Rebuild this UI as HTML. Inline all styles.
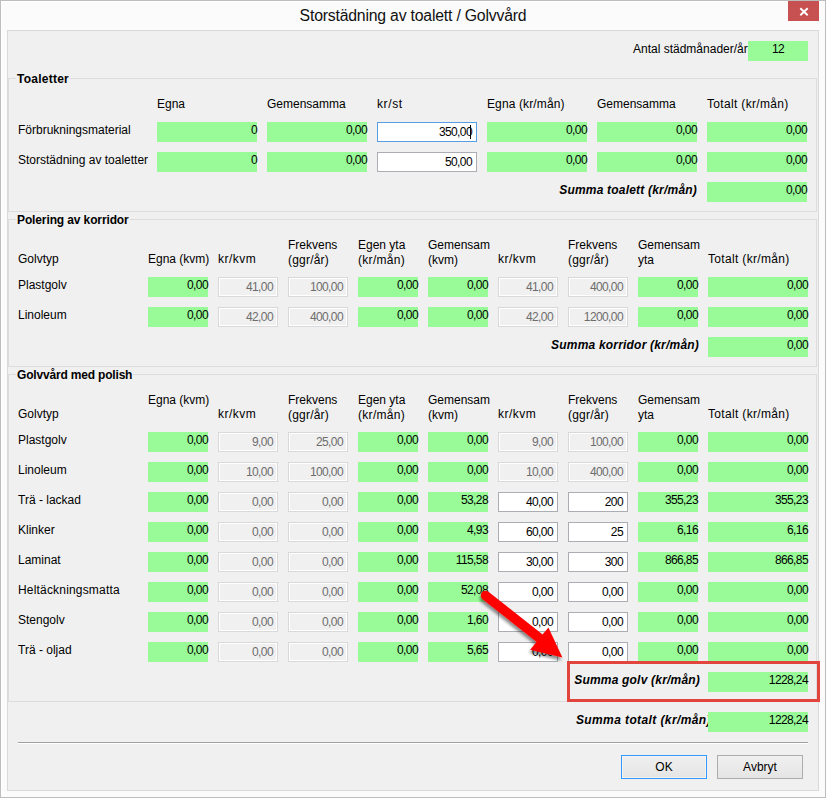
<!DOCTYPE html>
<html><head><meta charset="utf-8"><style>
html,body{margin:0;padding:0;width:826px;height:798px;overflow:hidden;background:#fbfbfb;}
body{position:relative;font-family:'Liberation Sans', sans-serif;font-size:12px;color:#000;}
.t{position:absolute;white-space:nowrap;line-height:14px;}
.b{font-weight:bold;}
.bi{font-weight:bold;font-style:italic;letter-spacing:0.2px;}
.ln{position:absolute;}
.g{position:absolute;background:#98fb98;}
.g i,.d i,.w i{font-style:normal;position:absolute;white-space:nowrap;line-height:14px;letter-spacing:-0.6px;}
.g i{right:0px;top:1px;}
.g i.c{right:auto;left:0;width:100%;text-align:center;}
.d,.w{position:absolute;border:1px solid #d9d9d9;}
.d{background:#f0f0f0;box-shadow:inset 0 0 0 1px #fff;color:#6d6d6d;}
.w{background:#fff;border-color:#abadb3;}
.w.f{border-color:#569de5;}
.d i,.w i{right:4px;top:2px;}
.caret{position:absolute;left:92px;top:2px;width:1px;height:14px;background:#000;}
</style></head><body>
<div class="ln" style="left:0;top:0;width:824px;height:796px;border:1px solid #bdbdbd;background:#fbfbfb"></div>
<div class="ln" style="left:1px;top:1px;width:823px;height:1px;background:#fff"></div>
<div class="ln" style="left:1px;top:1px;width:1px;height:795px;background:#fff"></div>
<div class="t" style="left:0;width:826px;text-align:center;top:7px;font-size:15.8px;line-height:18px;letter-spacing:-0.2px;color:#111">Storstädning av toalett / Golvvård</div>
<div class="ln" style="left:788px;top:1px;width:31px;height:20px;background:#c75050"></div>
<svg class="ln" style="left:788px;top:1px" width="31" height="20"><path d="M12.3 7.2 L19.7 14.3 M19.7 7.2 L12.3 14.3" stroke="#fff" stroke-width="1.9"/></svg>
<div class="ln" style="left:7px;top:30px;width:810px;height:759px;border:1px solid #d9d9d9;background:#f0f0f0"></div>
<div class="t " style="left:633px;top:42px;">Antal städmånader/år</div>
<div class="g" style="left:748px;top:41px;width:60px;height:20px"><i class="c">12</i></div>
<div class="ln" style="left:8px;top:78px;width:1px;height:134px;background:#dcdcdc"></div>
<div class="ln" style="left:816px;top:78px;width:1px;height:134px;background:#dcdcdc"></div>
<div class="ln" style="left:8px;top:211px;width:809px;height:1px;background:#dcdcdc"></div>
<div class="ln" style="left:8px;top:78px;width:8px;height:1px;background:#dcdcdc"></div>
<div class="ln" style="left:70px;top:78px;width:747px;height:1px;background:#dcdcdc"></div>
<div class="t b" style="left:17px;top:72px;letter-spacing:0.25px">Toaletter</div>
<div class="t " style="left:157px;top:97px;">Egna</div>
<div class="t " style="left:267px;top:97px;">Gemensamma</div>
<div class="t " style="left:377px;top:97px;letter-spacing:0.6px">kr/st</div>
<div class="t " style="left:487px;top:97px;letter-spacing:0.12px">Egna (kr/mån)</div>
<div class="t " style="left:597px;top:97px;">Gemensamma</div>
<div class="t " style="left:707px;top:97px;letter-spacing:0.33px">Totalt (kr/mån)</div>
<div class="t " style="left:18px;top:123px;">Förbrukningsmaterial</div>
<div class="g" style="left:157px;top:122px;width:100px;height:20px"><i>0</i></div>
<div class="g" style="left:267px;top:122px;width:100px;height:20px"><i>0,00</i></div>
<div class="w f" style="left:377px;top:122px;width:98px;height:18px"><i>350,00</i><b class="caret"></b></div>
<div class="g" style="left:487px;top:122px;width:100px;height:20px"><i>0,00</i></div>
<div class="g" style="left:597px;top:122px;width:100px;height:20px"><i>0,00</i></div>
<div class="g" style="left:707px;top:122px;width:100px;height:20px"><i>0,00</i></div>
<div class="t " style="left:18px;top:153px;">Storstädning av toaletter</div>
<div class="g" style="left:157px;top:152px;width:100px;height:20px"><i>0</i></div>
<div class="g" style="left:267px;top:152px;width:100px;height:20px"><i>0,00</i></div>
<div class="w" style="left:377px;top:152px;width:98px;height:18px"><i>50,00</i></div>
<div class="g" style="left:487px;top:152px;width:100px;height:20px"><i>0,00</i></div>
<div class="g" style="left:597px;top:152px;width:100px;height:20px"><i>0,00</i></div>
<div class="g" style="left:707px;top:152px;width:100px;height:20px"><i>0,00</i></div>
<div class="t bi" style="right:129px;top:183px;">Summa toalett (kr/mån)</div>
<div class="g" style="left:707px;top:182px;width:100px;height:20px"><i>0,00</i></div>
<div class="ln" style="left:8px;top:219px;width:1px;height:148px;background:#dcdcdc"></div>
<div class="ln" style="left:816px;top:219px;width:1px;height:148px;background:#dcdcdc"></div>
<div class="ln" style="left:8px;top:366px;width:809px;height:1px;background:#dcdcdc"></div>
<div class="ln" style="left:8px;top:219px;width:8px;height:1px;background:#dcdcdc"></div>
<div class="ln" style="left:130px;top:219px;width:687px;height:1px;background:#dcdcdc"></div>
<div class="t b" style="left:17px;top:213px;letter-spacing:-0.12px">Polering av korridor</div>
<div class="t " style="left:18px;top:252px;">Golvtyp</div>
<div class="t " style="left:148px;top:252px;">Egna (kvm)</div>
<div class="t " style="left:218px;top:252px;letter-spacing:0.5px">kr/kvm</div>
<div class="t " style="left:288px;top:238px;">Frekvens</div>
<div class="t " style="left:288px;top:253px;letter-spacing:0.2px">(ggr/år)</div>
<div class="t " style="left:358px;top:238px;">Egen yta</div>
<div class="t " style="left:358px;top:253px;letter-spacing:0.3px">(kr/mån)</div>
<div class="t " style="left:428px;top:238px;">Gemensam</div>
<div class="t " style="left:428px;top:253px;">(kvm)</div>
<div class="t " style="left:498px;top:252px;letter-spacing:0.5px">kr/kvm</div>
<div class="t " style="left:568px;top:238px;">Frekvens</div>
<div class="t " style="left:568px;top:253px;letter-spacing:0.2px">(ggr/år)</div>
<div class="t " style="left:638px;top:238px;">Gemensam</div>
<div class="t " style="left:638px;top:253px;">yta</div>
<div class="t " style="left:708px;top:252px;letter-spacing:0.33px">Totalt (kr/mån)</div>
<div class="t " style="left:18px;top:278px;">Plastgolv</div>
<div class="g" style="left:148px;top:277px;width:60px;height:20px"><i>0,00</i></div>
<div class="d" style="left:218px;top:277px;width:58px;height:18px"><i>41,00</i></div>
<div class="d" style="left:288px;top:277px;width:58px;height:18px"><i>100,00</i></div>
<div class="g" style="left:358px;top:277px;width:60px;height:20px"><i>0,00</i></div>
<div class="g" style="left:428px;top:277px;width:60px;height:20px"><i>0,00</i></div>
<div class="d" style="left:498px;top:277px;width:58px;height:18px"><i>41,00</i></div>
<div class="d" style="left:568px;top:277px;width:58px;height:18px"><i>400,00</i></div>
<div class="g" style="left:638px;top:277px;width:60px;height:20px"><i>0,00</i></div>
<div class="g" style="left:708px;top:277px;width:100px;height:20px"><i>0,00</i></div>
<div class="t " style="left:18px;top:308px;">Linoleum</div>
<div class="g" style="left:148px;top:307px;width:60px;height:20px"><i>0,00</i></div>
<div class="d" style="left:218px;top:307px;width:58px;height:18px"><i>42,00</i></div>
<div class="d" style="left:288px;top:307px;width:58px;height:18px"><i>400,00</i></div>
<div class="g" style="left:358px;top:307px;width:60px;height:20px"><i>0,00</i></div>
<div class="g" style="left:428px;top:307px;width:60px;height:20px"><i>0,00</i></div>
<div class="d" style="left:498px;top:307px;width:58px;height:18px"><i>42,00</i></div>
<div class="d" style="left:568px;top:307px;width:58px;height:18px"><i>1200,00</i></div>
<div class="g" style="left:638px;top:307px;width:60px;height:20px"><i>0,00</i></div>
<div class="g" style="left:708px;top:307px;width:100px;height:20px"><i>0,00</i></div>
<div class="t bi" style="right:127px;top:338px;">Summa korridor (kr/mån)</div>
<div class="g" style="left:708px;top:337px;width:100px;height:20px"><i>0,00</i></div>
<div class="ln" style="left:8px;top:374px;width:1px;height:328px;background:#dcdcdc"></div>
<div class="ln" style="left:816px;top:374px;width:1px;height:328px;background:#dcdcdc"></div>
<div class="ln" style="left:8px;top:701px;width:809px;height:1px;background:#dcdcdc"></div>
<div class="ln" style="left:8px;top:374px;width:8px;height:1px;background:#dcdcdc"></div>
<div class="ln" style="left:133px;top:374px;width:684px;height:1px;background:#dcdcdc"></div>
<div class="t b" style="left:17px;top:368px;letter-spacing:-0.18px">Golvvård med polish</div>
<div class="t " style="left:18px;top:407px;">Golvtyp</div>
<div class="t " style="left:148px;top:393px;">Egna (kvm)</div>
<div class="t " style="left:218px;top:407px;letter-spacing:0.5px">kr/kvm</div>
<div class="t " style="left:288px;top:393px;">Frekvens</div>
<div class="t " style="left:288px;top:408px;letter-spacing:0.2px">(ggr/år)</div>
<div class="t " style="left:358px;top:393px;">Egen yta</div>
<div class="t " style="left:358px;top:408px;letter-spacing:0.3px">(kr/mån)</div>
<div class="t " style="left:428px;top:393px;">Gemensam</div>
<div class="t " style="left:428px;top:408px;">(kvm)</div>
<div class="t " style="left:498px;top:407px;letter-spacing:0.5px">kr/kvm</div>
<div class="t " style="left:568px;top:393px;">Frekvens</div>
<div class="t " style="left:568px;top:408px;letter-spacing:0.2px">(ggr/år)</div>
<div class="t " style="left:638px;top:393px;">Gemensam</div>
<div class="t " style="left:638px;top:408px;">yta</div>
<div class="t " style="left:708px;top:407px;letter-spacing:0.33px">Totalt (kr/mån)</div>
<div class="t " style="left:18px;top:433px;">Plastgolv</div>
<div class="g" style="left:148px;top:432px;width:60px;height:20px"><i>0,00</i></div>
<div class="d" style="left:218px;top:432px;width:58px;height:18px"><i>9,00</i></div>
<div class="d" style="left:288px;top:432px;width:58px;height:18px"><i>25,00</i></div>
<div class="g" style="left:358px;top:432px;width:60px;height:20px"><i>0,00</i></div>
<div class="g" style="left:428px;top:432px;width:60px;height:20px"><i>0,00</i></div>
<div class="d" style="left:498px;top:432px;width:58px;height:18px"><i>9,00</i></div>
<div class="d" style="left:568px;top:432px;width:58px;height:18px"><i>100,00</i></div>
<div class="g" style="left:638px;top:432px;width:60px;height:20px"><i>0,00</i></div>
<div class="g" style="left:708px;top:432px;width:100px;height:20px"><i>0,00</i></div>
<div class="t " style="left:18px;top:463px;">Linoleum</div>
<div class="g" style="left:148px;top:462px;width:60px;height:20px"><i>0,00</i></div>
<div class="d" style="left:218px;top:462px;width:58px;height:18px"><i>10,00</i></div>
<div class="d" style="left:288px;top:462px;width:58px;height:18px"><i>100,00</i></div>
<div class="g" style="left:358px;top:462px;width:60px;height:20px"><i>0,00</i></div>
<div class="g" style="left:428px;top:462px;width:60px;height:20px"><i>0,00</i></div>
<div class="d" style="left:498px;top:462px;width:58px;height:18px"><i>10,00</i></div>
<div class="d" style="left:568px;top:462px;width:58px;height:18px"><i>400,00</i></div>
<div class="g" style="left:638px;top:462px;width:60px;height:20px"><i>0,00</i></div>
<div class="g" style="left:708px;top:462px;width:100px;height:20px"><i>0,00</i></div>
<div class="t " style="left:18px;top:493px;">Trä - lackad</div>
<div class="g" style="left:148px;top:492px;width:60px;height:20px"><i>0,00</i></div>
<div class="d" style="left:218px;top:492px;width:58px;height:18px"><i>0,00</i></div>
<div class="d" style="left:288px;top:492px;width:58px;height:18px"><i>0,00</i></div>
<div class="g" style="left:358px;top:492px;width:60px;height:20px"><i>0,00</i></div>
<div class="g" style="left:428px;top:492px;width:60px;height:20px"><i>53,28</i></div>
<div class="w" style="left:498px;top:492px;width:58px;height:18px"><i>40,00</i></div>
<div class="w" style="left:568px;top:492px;width:58px;height:18px"><i>200</i></div>
<div class="g" style="left:638px;top:492px;width:60px;height:20px"><i>355,23</i></div>
<div class="g" style="left:708px;top:492px;width:100px;height:20px"><i>355,23</i></div>
<div class="t " style="left:18px;top:523px;">Klinker</div>
<div class="g" style="left:148px;top:522px;width:60px;height:20px"><i>0,00</i></div>
<div class="d" style="left:218px;top:522px;width:58px;height:18px"><i>0,00</i></div>
<div class="d" style="left:288px;top:522px;width:58px;height:18px"><i>0,00</i></div>
<div class="g" style="left:358px;top:522px;width:60px;height:20px"><i>0,00</i></div>
<div class="g" style="left:428px;top:522px;width:60px;height:20px"><i>4,93</i></div>
<div class="w" style="left:498px;top:522px;width:58px;height:18px"><i>60,00</i></div>
<div class="w" style="left:568px;top:522px;width:58px;height:18px"><i>25</i></div>
<div class="g" style="left:638px;top:522px;width:60px;height:20px"><i>6,16</i></div>
<div class="g" style="left:708px;top:522px;width:100px;height:20px"><i>6,16</i></div>
<div class="t " style="left:18px;top:553px;">Laminat</div>
<div class="g" style="left:148px;top:552px;width:60px;height:20px"><i>0,00</i></div>
<div class="d" style="left:218px;top:552px;width:58px;height:18px"><i>0,00</i></div>
<div class="d" style="left:288px;top:552px;width:58px;height:18px"><i>0,00</i></div>
<div class="g" style="left:358px;top:552px;width:60px;height:20px"><i>0,00</i></div>
<div class="g" style="left:428px;top:552px;width:60px;height:20px"><i>115,58</i></div>
<div class="w" style="left:498px;top:552px;width:58px;height:18px"><i>30,00</i></div>
<div class="w" style="left:568px;top:552px;width:58px;height:18px"><i>300</i></div>
<div class="g" style="left:638px;top:552px;width:60px;height:20px"><i>866,85</i></div>
<div class="g" style="left:708px;top:552px;width:100px;height:20px"><i>866,85</i></div>
<div class="t " style="left:18px;top:583px;letter-spacing:0.18px">Heltäckningsmatta</div>
<div class="g" style="left:148px;top:582px;width:60px;height:20px"><i>0,00</i></div>
<div class="d" style="left:218px;top:582px;width:58px;height:18px"><i>0,00</i></div>
<div class="d" style="left:288px;top:582px;width:58px;height:18px"><i>0,00</i></div>
<div class="g" style="left:358px;top:582px;width:60px;height:20px"><i>0,00</i></div>
<div class="g" style="left:428px;top:582px;width:60px;height:20px"><i>52,08</i></div>
<div class="w" style="left:498px;top:582px;width:58px;height:18px"><i>0,00</i></div>
<div class="w" style="left:568px;top:582px;width:58px;height:18px"><i>0,00</i></div>
<div class="g" style="left:638px;top:582px;width:60px;height:20px"><i>0,00</i></div>
<div class="g" style="left:708px;top:582px;width:100px;height:20px"><i>0,00</i></div>
<div class="t " style="left:18px;top:613px;">Stengolv</div>
<div class="g" style="left:148px;top:612px;width:60px;height:20px"><i>0,00</i></div>
<div class="d" style="left:218px;top:612px;width:58px;height:18px"><i>0,00</i></div>
<div class="d" style="left:288px;top:612px;width:58px;height:18px"><i>0,00</i></div>
<div class="g" style="left:358px;top:612px;width:60px;height:20px"><i>0,00</i></div>
<div class="g" style="left:428px;top:612px;width:60px;height:20px"><i>1,60</i></div>
<div class="w" style="left:498px;top:612px;width:58px;height:18px"><i>0,00</i></div>
<div class="w" style="left:568px;top:612px;width:58px;height:18px"><i>0,00</i></div>
<div class="g" style="left:638px;top:612px;width:60px;height:20px"><i>0,00</i></div>
<div class="g" style="left:708px;top:612px;width:100px;height:20px"><i>0,00</i></div>
<div class="t " style="left:18px;top:643px;">Trä - oljad</div>
<div class="g" style="left:148px;top:642px;width:60px;height:20px"><i>0,00</i></div>
<div class="d" style="left:218px;top:642px;width:58px;height:18px"><i>0,00</i></div>
<div class="d" style="left:288px;top:642px;width:58px;height:18px"><i>0,00</i></div>
<div class="g" style="left:358px;top:642px;width:60px;height:20px"><i>0,00</i></div>
<div class="g" style="left:428px;top:642px;width:60px;height:20px"><i>5,65</i></div>
<div class="w" style="left:498px;top:642px;width:58px;height:18px"><i>0,00</i></div>
<div class="w" style="left:568px;top:642px;width:58px;height:18px"><i>0,00</i></div>
<div class="g" style="left:638px;top:642px;width:60px;height:20px"><i>0,00</i></div>
<div class="g" style="left:708px;top:642px;width:100px;height:20px"><i>0,00</i></div>
<div class="t bi" style="right:126px;top:673px;">Summa golv (kr/mån)</div>
<div class="g" style="left:708px;top:672px;width:100px;height:20px"><i>1228,24</i></div>
<div class="t bi" style="right:115px;top:713px;letter-spacing:0.4px">Summa totalt (kr/mån)</div>
<div class="g" style="left:708px;top:712px;width:100px;height:20px"><i>1228,24</i></div>
<div class="ln" style="left:18px;top:742px;width:790px;height:1px;background:#a0a0a0"></div>
<div class="ln" style="left:18px;top:743px;width:790px;height:1px;background:#ffffff"></div>
<div class="ln" style="left:621px;top:755px;width:84px;height:22px;border:1px solid #3399ff;background:linear-gradient(#efefef,#e5e5e5);box-shadow:inset 0 0 0 1px #f6f3ee"></div>
<div class="t" style="left:621px;width:86px;text-align:center;top:760px">OK</div>
<div class="ln" style="left:717px;top:755px;width:84px;height:22px;border:1px solid #acacac;background:linear-gradient(#f0f0f0,#e5e5e5)"></div>
<div class="t" style="left:717px;width:86px;text-align:center;top:760px">Avbryt</div>
<div class="ln" style="left:567px;top:661px;width:247px;height:35px;border:3px solid #e2453e"></div>
<svg class="ln" style="left:0;top:0" width="826" height="798"><defs><filter id="sh" x="-20%" y="-20%" width="140%" height="140%"><feGaussianBlur in="SourceAlpha" stdDeviation="1.6"/><feOffset dx="-1" dy="2.5"/><feComponentTransfer><feFuncA type="linear" slope="0.45"/></feComponentTransfer><feMerge><feMergeNode/><feMergeNode in="SourceGraphic"/></feMerge></filter></defs>
<g filter="url(#sh)"><line x1="485.5" y1="595.5" x2="540" y2="638.5" stroke="#ff0000" stroke-width="9.5" stroke-linecap="round"/><polygon points="548.4,627.6 530.2,649.7 562.4,657.6" fill="#ff0000"/></g></svg>
</body></html>
